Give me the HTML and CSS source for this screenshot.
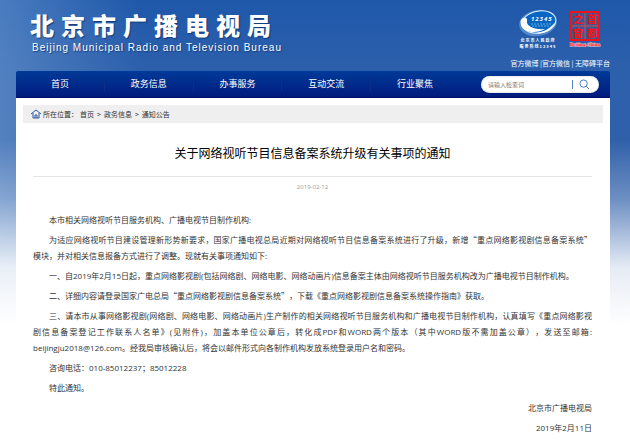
FILE: index.html
```html
<!DOCTYPE html>
<html lang="zh-CN">
<head>
<meta charset="utf-8">
<meta name="viewport" content="width=device-width, initial-scale=1">
<title>北京市广播电视局</title>
<link rel="stylesheet" href="styles.css">
</head>
<body>
<div class="page">
  <header class="header">
    <div class="brand">
      <div class="brand-name">北京市广播电视局</div>
      <div class="brand-en">Beijing Municipal Radio and Television Bureau</div>
    </div>
    <div class="tools">
      <div class="badges">
        <a class="hotline" href="#">
          <svg class="hotline-mark" viewBox="0 0 40 28" aria-hidden="true">
            <ellipse class="halo" cx="20" cy="14" rx="19" ry="13" transform="rotate(-10 20 14)"/>
            <ellipse class="disc" cx="21" cy="13" rx="17" ry="11" transform="rotate(-10 21 13)"/>
            <path class="swoosh" d="M5 9C7 8 10 9 9 12C8 17 16 21 27 20C19 25 5 24 3 16C2 12 3 10 5 9Z"/>
            <path class="swoosh" d="M17 24C26 23 32 20 37 13C35 20 27 26 17 24Z"/>
            <path class="ray" d="M13 15H33M14 17H31"/>
            <text x="13" y="12">12345</text>
          </svg>
          <span>北京市人民政府</span>
          <span>服务热线12345</span>
        </a>
        <a class="seal" href="#">
          <svg viewBox="0 0 34 38" aria-hidden="true">
            <rect class="frame" x="3" y="3" width="28" height="28"/>
            <path class="cross" d="M17 4V30M4 17H30"/>
            <text x="5" y="14">之</text><text x="19" y="14">首</text>
            <text x="5" y="28">窗</text><text x="19" y="28">都</text>
            <text class="latin" x="17" y="37">Beijing-China</text>
          </svg>
        </a>
      </div>
      <div class="quick"><a href="#">官方微博</a> |<a href="#">官方微信</a> | <a href="#">无障碍平台</a></div>
    </div>
  </header>
  <nav class="nav">
    <ul class="menu">
      <li><a href="#">首页</a></li>
      <li><a href="#">政务信息</a></li>
      <li><a href="#">办事服务</a></li>
      <li><a href="#">互动交流</a></li>
      <li><a href="#">行业聚焦</a></li>
    </ul>
    <form class="search">
      <input type="text" aria-label="请输入检索词" placeholder="请输入检索词">
      <button type="button" aria-label="搜索">
        <svg viewBox="0 0 12 12" aria-hidden="true"><circle cx="5" cy="5" r="4"/><path d="M8 8L11 11"/></svg>
      </button>
    </form>
  </nav>
  <main class="content">
    <div class="crumbs">
      <svg viewBox="0 0 10 10" aria-hidden="true"><path d="M0 5L5 1L10 5M2 4V9H8V4M4 9V6H6V9"/></svg>
      <span>所在位置：</span><a href="#">首页</a><span>&gt;</span><a href="#">政务信息</a><span>&gt;</span><a href="#">通知公告</a>
    </div>
    <article class="article">
      <h1>关于网络视听节目信息备案系统升级有关事项的通知</h1>
      <time class="date" datetime="2019-02-12">2019-02-12</time>
      <div class="text">
        <p>本市相关网络视听节目服务机构、广播电视节目制作机构:</p>
        <p>为适应网络视听节目建设管理新形势新要求，国家广播电视总局近期对网络视听节目信息备案系统进行了升级，新增<span class="mark">“</span>重点网络影视剧信息备案系统<span class="mark">”</span><span class="keep">模块，</span>并对相关信息报备方式进行了调整。现就有关事项通知如下:</p>
        <p>一、自2019年2月15日起，重点网络影视剧(包括网络剧、网络电影、网络动画片)信息备案主体由网络视听节目服务机构改为广播电视节目制作机构。</p>
        <p>二、详细内容请登录国家广电总局<span class="mark">“</span>重点网络影视剧信息备案系统<span class="mark">”</span>，下载《重点网络影视剧信息备案系统操作指南》获取。</p>
        <p>三、请本市从事网络影视剧(网络剧、网络电影、网络动画片)生产制作的相关网络视听节目服务机构和广播电视节目制作机构，认真填写《重点网络影视<span class="keep">剧信息</span>备案登记工作联系人名单》(见附件)，加盖本单位公章后，转化成PDF和WORD两个版本（其中WORD版不需加盖公章），发送至邮箱: <span class="keep">beijingju2018@126.com</span>。经我局审核确认后，将会以邮件形式向各制作机构发放系统登录用户名和密码。</p>
        <p>咨询电话：010-85012237；85012228</p>
        <p>特此通知。</p>
        <p class="sign">北京市广播电视局</p>
        <p class="sign">2019年2月11日</p>
      </div>
    </article>
  </main>
</div>
</body>
</html>
```
FILE: styles.css
```css
* { box-sizing: border-box; }

body {
  margin: 0;
  font-family: "Noto Sans CJK SC", "Noto Sans", sans-serif;
  font-size: 8px;
  color: #333;
  background-color: #fff;
  background-image:
    linear-gradient(to bottom, rgba(255,255,255,0) 140px, rgba(255,255,255,.3) 200px, rgba(255,255,255,.88) 268px, #fff 325px),
    linear-gradient(to right, rgba(150,190,230,.35), rgba(150,190,230,0) 140px),
    linear-gradient(to bottom, #1f58aa, #2d60ac 72px, #3060aa 140px);
  background-size: 100% 330px;
  background-repeat: no-repeat;
}

a { color: inherit; text-decoration: none; }

.page { padding: 0 20px 0 16px; }

.header {
  display: flex;
  justify-content: space-between;
  height: 71px;
  color: #fff;
}

.brand { padding: 8px 0 0 14px; white-space: nowrap; }

.brand-name {
  font-size: 24px;
  font-weight: 900;
  line-height: 34px;
  letter-spacing: 7px;
  text-shadow: 1px 1px 1px #123a78;
}

.brand-en {
  margin-left: 2px;
  font-family: "Liberation Sans", sans-serif;
  font-size: 10px;
  line-height: 12px;
  letter-spacing: 1px;
  text-shadow: 1px 1px 1px #123a78;
}

.tools {
  display: flex;
  flex-direction: column;
  align-items: flex-end;
  padding-top: 9px;
}

.badges { display: flex; gap: 10px; padding-right: 8px; }

.hotline {
  display: flex;
  flex-direction: column;
  align-items: center;
  font-size: 4px;
  font-weight: 700;
  line-height: 6px;
  letter-spacing: 1px;
  white-space: nowrap;
}

.hotline-mark { width: 40px; height: 28px; }
.halo { fill: #7db3e8; opacity: .5; }
.disc { fill: #0866c2; stroke: #e4f2fc; stroke-width: 1; }
.swoosh { fill: #fff; }
.ray { stroke: #5fb0dc; stroke-width: 1; stroke-dasharray: 2 1; }
.hotline-mark text {
  fill: #fff;
  font: italic 700 6px "Noto Sans", sans-serif;
}

.seal svg { display: block; width: 34px; height: 38px; }
.frame { fill: #39598f; stroke: #f01218; stroke-width: 2; }
.cross { stroke: #d54a5b; stroke-width: 1; }
.seal text {
  fill: #ff1018;
  font-size: 10px;
  font-weight: 900;
}
.seal .latin {
  font: 700 5px "Liberation Serif", serif;
  text-anchor: middle;
  stroke: #f4c4cc;
  stroke-width: 1;
  paint-order: stroke;
}

.quick {
  margin-top: 8px;
  font-size: 7px;
  line-height: 12px;
  white-space: nowrap;
}

.nav {
  display: flex;
  align-items: center;
  justify-content: space-between;
  height: 27px;
  padding-right: 11px;
  color: #fff;
  background: linear-gradient(#003a99, #001b7d);
  border-bottom: 1px solid #001064;
  border-radius: 2px 2px 0 0;
}

.menu {
  display: flex;
  flex: 0 1 443px;
  margin: 0;
  padding: 0;
  list-style: none;
  font-size: 9px;
}

.menu li { flex: 1; text-align: center; line-height: 14px; }
.menu li + li { border-left: 1px solid #0b2f87; }

.search {
  display: flex;
  align-items: center;
  width: 118px;
  height: 17px;
  padding: 0 4px 0 7px;
  border-radius: 9px;
  background: #fff;
  box-shadow: inset 0 0 2px #bbb;
}

.search input {
  flex: 1;
  min-width: 0;
  padding: 0;
  border: 0;
  outline: 0;
  background: none;
  font: 6px "Noto Sans CJK SC", sans-serif;
  color: #333;
}
.search input::placeholder { color: #777; opacity: 1; }

.search button {
  display: flex;
  align-items: center;
  justify-content: center;
  width: 23px;
  height: 9px;
  padding: 0;
  border: 0;
  border-left: 1px solid #5481be;
  background: none;
}
.search button svg { flex: none; width: 11px; height: 11px; }
.search circle, .search path { fill: none; stroke: #3d71b7; stroke-width: 1; }

.content {
  min-height: calc(100vh - 98px);
  padding: 7px 7px 3px;
  background: #fff;
}

.crumbs {
  display: flex;
  align-items: center;
  gap: 2px;
  height: 18px;
  padding-left: 8px;
  background: #efefef;
  font-size: 7px;
  line-height: 18px;
}
.crumbs a + span, .crumbs a + span + a { margin-left: 1px; }
.crumbs svg { width: 10px; height: 10px; fill: none; stroke: #2a57a3; stroke-width: 1; }

.article { padding: 20px 11px 0 10px; }

.article h1 {
  margin: 0;
  padding-bottom: 13px;
  border-bottom: 1px solid #e6e6e6;
  font-size: 12px;
  font-weight: 400;
  line-height: 20px;
  text-align: center;
  color: #000;
}

.date {
  display: block;
  margin-top: 5px;
  font-family: "Open Sans", sans-serif;
  font-size: 6px;
  line-height: 10px;
  text-align: center;
  color: #999;
}

.text {
  padding-top: 20px;
  font-family: "Open Sans", "Noto Sans CJK SC", sans-serif;
  text-spacing-trim: space-all;
}

.text p {
  margin: 0 0 4px;
  line-height: 16px;
  text-align: justify;
  text-indent: 2em;
}
.text .sign { text-align: right; }
.mark { font-family: "Noto Sans CJK SC", sans-serif; }
.keep { white-space: nowrap; }
```
